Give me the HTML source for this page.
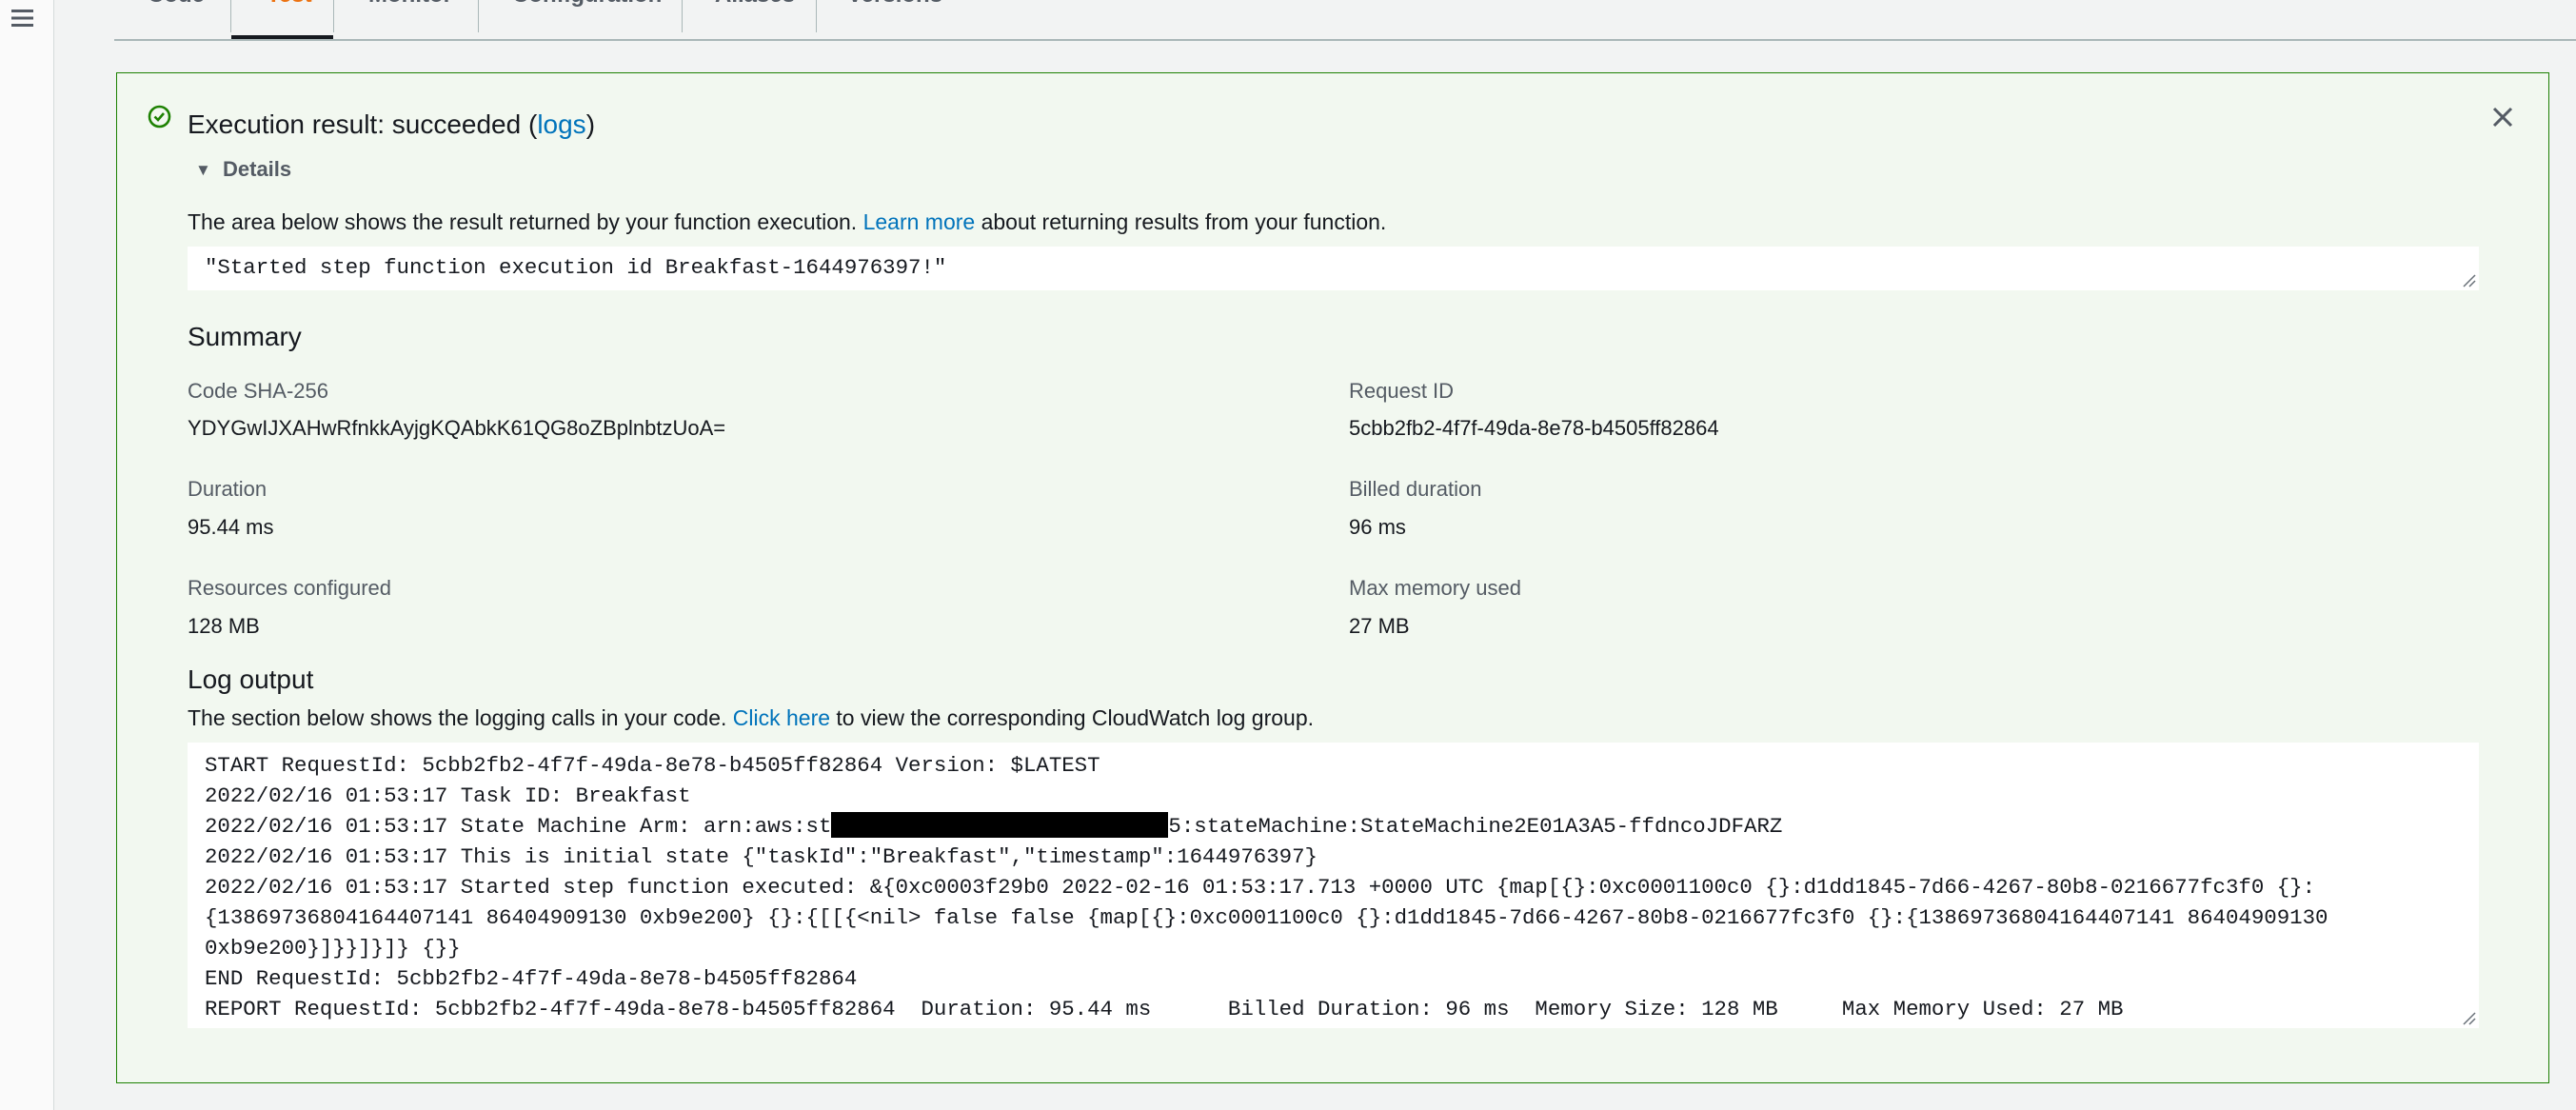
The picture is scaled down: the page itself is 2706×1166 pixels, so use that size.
<!DOCTYPE html>
<html><head><meta charset="utf-8"><style>
*{margin:0;padding:0;box-sizing:border-box}
body{width:2706px;height:1166px;background:#f2f3f3;font-family:"Liberation Sans",sans-serif;color:#16191f;position:relative;overflow:hidden}
.a{position:absolute;white-space:pre;line-height:1}
.side{position:absolute;left:0;top:0;width:57px;height:1166px;background:#fafafa;border-right:1px solid #d5dbdb}
.tab{position:absolute;top:-17px;font-size:24px;font-weight:bold;color:#545b64}
.sep{position:absolute;top:0;width:1px;height:34px;background:#aab7b8}
.box{position:absolute;left:122px;top:76px;width:2556px;height:1062px;background:#f2f8f0;border:1px solid #1d8102}
.lbl{color:#545b64;font-size:22px}
.val{font-size:22px}
.mono{font-family:"Liberation Mono",monospace;font-size:22.4px}
.ta{position:absolute;background:#fff}
a{color:#0073bb;text-decoration:none}
</style></head><body>
<div class="side"></div>
<svg class="a" style="left:12px;top:9px" width="24" height="20"><rect x="0" y="1" width="23" height="3" fill="#545b64"/><rect x="0" y="8.5" width="23" height="3" fill="#545b64"/><rect x="0" y="16" width="23" height="3" fill="#545b64"/></svg>
<div class="tab a" style="left:155px">Code</div>
<div class="tab a" style="left:280px;color:#ec7211">Test</div>
<div class="tab a" style="left:387px">Monitor</div>
<div class="tab a" style="left:538px">Configuration</div>
<div class="tab a" style="left:751px">Aliases</div>
<div class="tab a" style="left:890px">Versions</div>
<div class="sep" style="left:242px"></div><div class="sep" style="left:350px"></div><div class="sep" style="left:502px"></div><div class="sep" style="left:716px"></div><div class="sep" style="left:857px"></div>
<div class="a" style="left:120px;top:41px;width:2586px;height:2px;background:#aab7b8"></div>
<div class="a" style="left:243px;top:37px;width:107px;height:4px;background:#16191f"></div>
<div class="box"></div>
<svg class="a" style="left:155px;top:110px" width="25" height="25"><circle cx="12.5" cy="12.5" r="10.5" fill="none" stroke="#1d8102" stroke-width="2.6"/><path d="M7.5 12.5l3.5 3.5 6-7" fill="none" stroke="#1d8102" stroke-width="2.6"/></svg>
<div class="a" style="left:197px;top:117px;font-size:28px">Execution result: succeeded (<a>logs</a>)</div>
<svg class="a" style="left:2618px;top:112px" width="22" height="22"><path d="M2 2L20 20M20 2L2 20" stroke="#545b64" stroke-width="3"/></svg>
<div class="a" style="left:205px;top:170px;font-size:17px;color:#545b64">▼</div>
<div class="a" style="left:234px;top:167px;font-size:22px;font-weight:bold;color:#545b64">Details</div>
<div class="a" style="left:197px;top:222px;font-size:23px">The area below shows the result returned by your function execution. <a>Learn more</a> about returning results from your function.</div>
<div class="ta" style="left:197px;top:259px;width:2407px;height:46px"></div>
<div class="a mono" style="left:215px;top:270px">"Started step function execution id Breakfast-1644976397!"</div>
<div class="a" style="left:197px;top:340px;font-size:28px">Summary</div>
<div class="a lbl" style="left:197px;top:400px">Code SHA-256</div>
<div class="a val" style="left:197px;top:439px">YDYGwIJXAHwRfnkkAyjgKQAbkK61QG8oZBplnbtzUoA=</div>
<div class="a lbl" style="left:197px;top:503px">Duration</div>
<div class="a val" style="left:197px;top:543px">95.44 ms</div>
<div class="a lbl" style="left:197px;top:607px">Resources configured</div>
<div class="a val" style="left:197px;top:647px">128 MB</div>
<div class="a lbl" style="left:1417px;top:400px">Request ID</div>
<div class="a val" style="left:1417px;top:439px">5cbb2fb2-4f7f-49da-8e78-b4505ff82864</div>
<div class="a lbl" style="left:1417px;top:503px">Billed duration</div>
<div class="a val" style="left:1417px;top:543px">96 ms</div>
<div class="a lbl" style="left:1417px;top:607px">Max memory used</div>
<div class="a val" style="left:1417px;top:647px">27 MB</div>
<div class="a" style="left:197px;top:700px;font-size:28px">Log output</div>
<div class="a" style="left:197px;top:743px;font-size:23px">The section below shows the logging calls in your code. <a>Click here</a> to view the corresponding CloudWatch log group.</div>
<div class="ta" style="left:197px;top:780px;width:2407px;height:300px"></div>
<div class="a mono" style="left:215px;top:788px;line-height:32px">START RequestId: 5cbb2fb2-4f7f-49da-8e78-b4505ff82864 Version: $LATEST
2022/02/16 01:53:17 Task ID: Breakfast
2022/02/16 01:53:17 State Machine Arm: arn:aws:st<span style="display:inline-block;width:354px;height:27px;background:#000;vertical-align:-6px"></span>5:stateMachine:StateMachine2E01A3A5-ffdncoJDFARZ
2022/02/16 01:53:17 This is initial state {"taskId":"Breakfast","timestamp":1644976397}
2022/02/16 01:53:17 Started step function executed: &amp;{0xc0003f29b0 2022-02-16 01:53:17.713 +0000 UTC {map[{}:0xc0001100c0 {}:d1dd1845-7d66-4267-80b8-0216677fc3f0 {}:
{13869736804164407141 86404909130 0xb9e200} {}:{[[{&lt;nil&gt; false false {map[{}:0xc0001100c0 {}:d1dd1845-7d66-4267-80b8-0216677fc3f0 {}:{13869736804164407141 86404909130
0xb9e200}]}}]}]} {}}
END RequestId: 5cbb2fb2-4f7f-49da-8e78-b4505ff82864
REPORT RequestId: 5cbb2fb2-4f7f-49da-8e78-b4505ff82864  Duration: 95.44 ms      Billed Duration: 96 ms  Memory Size: 128 MB     Max Memory Used: 27 MB</div>
<svg class="a" style="left:2586px;top:287px" width="16" height="16"><path d="M2 14L14 2M8 14L14 8" stroke="#687078" stroke-width="1.5"/></svg>
<svg class="a" style="left:2586px;top:1062px" width="16" height="16"><path d="M2 14L14 2M8 14L14 8" stroke="#687078" stroke-width="1.5"/></svg>
</body></html>
